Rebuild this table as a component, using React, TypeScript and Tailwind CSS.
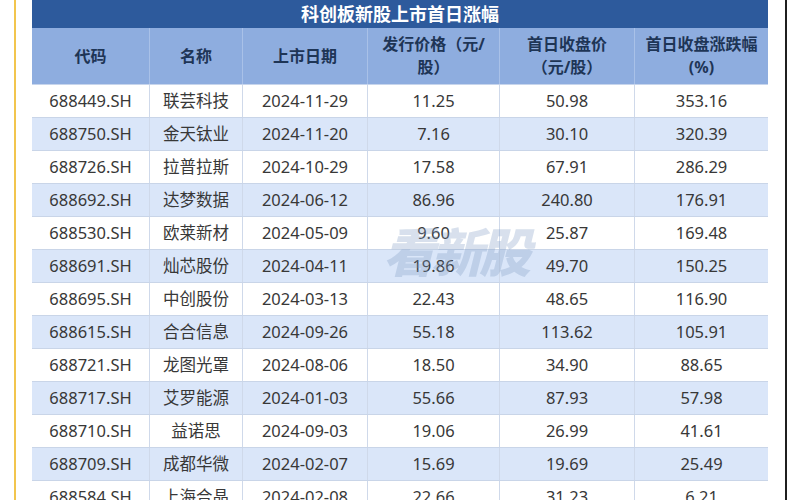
import React from "react";

const rows: string[][] = [
  ["688449.SH", "联芸科技", "2024-11-29", "11.25", "50.98", "353.16"],
  ["688750.SH", "金天钛业", "2024-11-20", "7.16", "30.10", "320.39"],
  ["688726.SH", "拉普拉斯", "2024-10-29", "17.58", "67.91", "286.29"],
  ["688692.SH", "达梦数据", "2024-06-12", "86.96", "240.80", "176.91"],
  ["688530.SH", "欧莱新材", "2024-05-09", "9.60", "25.87", "169.48"],
  ["688691.SH", "灿芯股份", "2024-04-11", "19.86", "49.70", "150.25"],
  ["688695.SH", "中创股份", "2024-03-13", "22.43", "48.65", "116.90"],
  ["688615.SH", "合合信息", "2024-09-26", "55.18", "113.62", "105.91"],
  ["688721.SH", "龙图光罩", "2024-08-06", "18.50", "34.90", "88.65"],
  ["688717.SH", "艾罗能源", "2024-01-03", "55.66", "87.93", "57.98"],
  ["688710.SH", "益诺思", "2024-09-03", "19.06", "26.99", "41.61"],
  ["688709.SH", "成都华微", "2024-02-07", "15.69", "19.69", "25.49"],
  ["688584.SH", "上海合晶", "2024-02-08", "22.66", "31.23", "6.21"],
];

const grid = "grid grid-cols-[118px_93px_125px_132px_135px_133px]";

export default function App() {
  return (
    <div
      className="w-[800px] h-[500px] overflow-hidden bg-white flex relative"
      style={{ fontFamily: '"Noto Sans", "Noto Sans CJK SC", sans-serif' }}
    >
      <div className="w-[14px] shrink-0" />
      <div className="w-[2px] shrink-0 bg-[#f2c54e]" />
      <div className="w-[16px] shrink-0" />
      <div className="w-[736px] shrink-0 flex flex-col">
        <div className="h-[28px] shrink-0 bg-[#2d5a9c] flex items-center justify-center text-white font-bold text-[18px] leading-none">
          科创板新股上市首日涨幅
        </div>
        <div className={`${grid} h-[57px] shrink-0 bg-[#8eaddf] text-[#1e3556] font-bold text-[16px] leading-[23px] border-b border-[#c7d5ec]`}>
          <div className="flex items-center justify-center text-center border-r border-[#a9c1e8]">代码</div>
          <div className="flex items-center justify-center text-center border-r border-[#a9c1e8]">名称</div>
          <div className="flex items-center justify-center text-center border-r border-[#a9c1e8]">上市日期</div>
          <div className="flex flex-col items-center justify-center text-center border-r border-[#a9c1e8]">
            <span>发行价格（元/</span>
            <span>股）</span>
          </div>
          <div className="flex flex-col items-center justify-center text-center border-r border-[#a9c1e8]">
            <span>首日收盘价</span>
            <span>（元/股）</span>
          </div>
          <div className="flex flex-col items-center justify-center text-center">
            <span>首日收盘涨跌幅</span>
            <span>(%)</span>
          </div>
        </div>
        {rows.map((r, i) => (
          <div
            key={i}
            className={`${grid} h-[33px] shrink-0 border-b border-[#c9d5e8] text-[16.5px] text-[#383838] ${
              i % 2 === 1 ? "bg-[#dae6f9]" : "bg-white"
            }`}
          >
            {r.map((c, j) => (
              <div
                key={j}
                className={`flex items-center justify-center ${j < 5 ? "border-r border-[#cfd9ea]" : ""}`}
              >
                {c}
              </div>
            ))}
          </div>
        ))}
      </div>
      <div className="w-[17px] shrink-0" />
      <div className="w-[2px] shrink-0 bg-[#1f1f1f]" />
      <div className="flex-1" />
      <div className="absolute left-[383px] top-[226px] text-[52px] font-black italic text-[#7f9cc4] opacity-30 leading-none tracking-[-4px] pointer-events-none select-none">
        看新股
      </div>
    </div>
  );
}
